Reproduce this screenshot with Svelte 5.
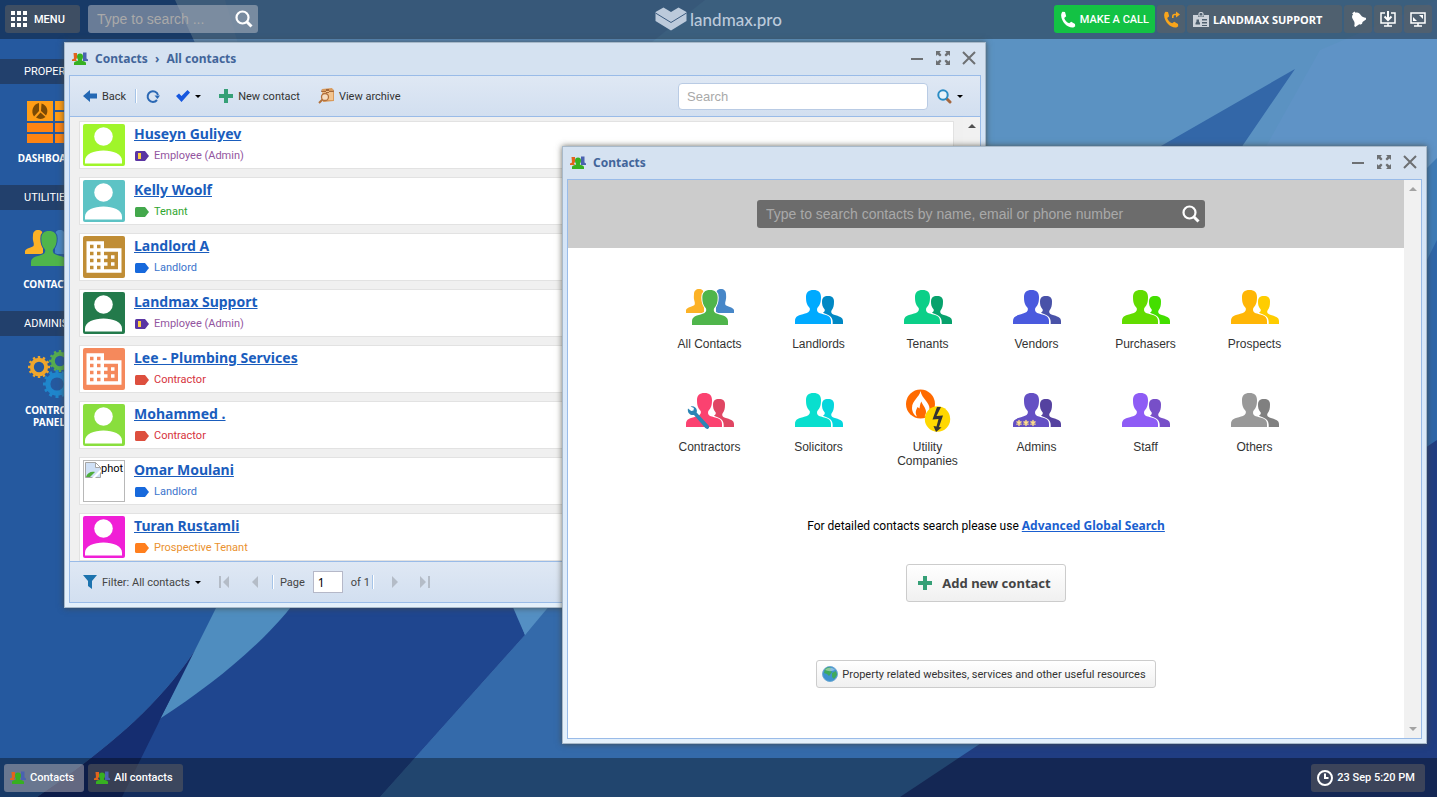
<script>
	// Contacts shown in the "All contacts" window
	const contacts = [
		{ name: 'Huseyn Guliyev', type: 'Employee (Admin)', kind: 'admin', avatar: 'person', color: '#a0f52a' },
		{ name: 'Kelly Woolf', type: 'Tenant', kind: 'tenant', avatar: 'person', color: '#5dc3c5' },
		{ name: 'Landlord A', type: 'Landlord', kind: 'landlord', avatar: 'company', color: '#c08d35' },
		{ name: 'Landmax Support', type: 'Employee (Admin)', kind: 'admin', avatar: 'person', color: '#237a4b' },
		{ name: 'Lee - Plumbing Services', type: 'Contractor', kind: 'contractor', avatar: 'company', color: '#f5895c' },
		{ name: 'Mohammed .', type: 'Contractor', kind: 'contractor', avatar: 'person', color: '#89de3d' },
		{ name: 'Omar Moulani', type: 'Landlord', kind: 'landlord', avatar: 'missing', color: '#ffffff' },
		{ name: 'Turan Rustamli', type: 'Prospective Tenant', kind: 'prospect', avatar: 'person', color: '#f01fd6' }
	];

	const kinds = {
		admin: { tag: '#5b35a3', text: '#9355a0' },
		tenant: { tag: '#43a84c', text: '#2fa62f' },
		landlord: { tag: '#1769dc', text: '#3a74cc' },
		contractor: { tag: '#dd4f3e', text: '#d6323c' },
		prospect: { tag: '#ff7f1e', text: '#ea912f' }
	};

	const groups = [
		{ label: 'All Contacts', icon: 'all' },
		{ label: 'Landlords', front: '#00aaff', back: '#0088c4' },
		{ label: 'Tenants', front: '#0bcf88', back: '#07a26c' },
		{ label: 'Vendors', front: '#4a5ade', back: '#4952a8' },
		{ label: 'Purchasers', front: '#62dc00', back: '#43df00' },
		{ label: 'Prospects', front: '#ffb606', back: '#ffcd00' },
		{ label: 'Contractors', front: '#fb4270', back: '#e04663', badge: 'wrench' },
		{ label: 'Solicitors', front: '#09dfce', back: '#06d6dc' },
		{ label: 'Utility Companies', icon: 'utility' },
		{ label: 'Admins', front: '#6450c4', back: '#5542a0', badge: 'stars' },
		{ label: 'Staff', front: '#8e5cf5', back: '#774fc8' },
		{ label: 'Others', front: '#999999', back: '#808080' }
	];

	const sections = [
		{ title: 'PROPERTY', item: 'DASHBOARD', icon: 'dashboard' },
		{ title: 'UTILITIES', item: 'CONTACTS', icon: 'contacts' },
		{ title: 'ADMINISTRATION', item: 'CONTROL PANEL', icon: 'gears' }
	];

	const teeth = [0, 30, 60, 90, 120, 150];

	let page = $state(1);
</script>

{#snippet peopleMini()}
	<svg class="mini" width="16" height="13" viewBox="0 0 16 13" aria-hidden="true">
		<path fill="#e2641d" d="M1.500 1h3.500v5l-1 1.500 1 1.500H0V7.500L2 6.500z" />
		<path fill="#4a62b0" d="M11 .5h3.500v6l1.500 1V9h-5z" />
		<path fill="#37b021" d="M8 1.500c2 0 3 1 3 3 0 1.500-.5 2.500-1.200 3.500.3 1.200 3.700 1 4.200 3V13H2v-2c.5-2 3.900-1.800 4.200-3C5.500 7 5 6 5 4.500c0-2 1-3 3-3z" />
	</svg>
{/snippet}

{#snippet peopleAll(gap)}
	<svg width="48" height="37" viewBox="0 0 48 37" aria-hidden="true">
		<path fill="#fcb226" d="M13 0c3 0 5 1.500 5 5v19H0v-3c1-3 7-3.500 8.500-5 .6-1.500.3-3-.2-4.500C7.500 9 8 6 8 5c0-3 2-5 5-5z" />
		<path fill="#4787c8" d="M35 0c-3 0-5 1.500-5 5v19h18v-3c-1-3-7-3.500-8.500-5-.6-1.500-.3-3 .2-4.500.8-2.500.3-5.500.3-6.500 0-3-2-5-5-5z" />
		<path fill="#4fb54b" stroke={gap} stroke-width="2" paint-order="stroke" d="M24 1c5 0 7.700 2.500 7.700 7.500 0 4.500-.7 7.500-3.700 11-.7 3 .5 4.500 4 5.500 6 1.800 10 2.500 10 7.500V36H6v-3.500C6 27.500 10 26.800 16 25c3.500-1 4.700-2.500 4-5.500-3-3.500-3.700-6.500-3.700-11C16.300 3.500 19 1 24 1z" />
	</svg>
{/snippet}

{#snippet people(front, back, badge)}
	<svg width="48" height="37" viewBox="0 0 48 37" aria-hidden="true">
		<path fill={back} d="M33 7c4 0 6 1.800 6 5.500 0 4-.5 6.500-2.500 9-.8 2 0 3.300 2.500 4.200 5 1.600 9 2.300 9 6.300v3H37.700c.3-5-1-7.500-5-9.300-2.500-1.200-4-1.500-4.700-2.200 1.500-.8 2-1.500 1.700-3-2.300-2.500-2.700-5-2.700-8C27 8.800 29 7 33 7z" />
		<path fill={front} d="M18.500 1C23.500 1 26 3.500 26 8c0 5-.8 8-3.700 11-.8 3 .2 4.500 3.700 5.600 6 1.900 10 2.400 10 7.400v3H0v-3c0-5 4-5.500 10-7.400 3.500-1.100 5.500-2.600 4.700-5.600C11.800 16 11 13 11 8c0-4.500 2.500-7 7.500-7z" />
		{#if badge === 'wrench'}
			<path fill="#2b85b5" d="M2 16.500l3.200 2.600 2.300-.5.400-2.600-3.300-1.500c3-.8 6 1 6.300 4 0 .8 0 1.400-.3 2l12 13c1 1.200.5 2.500-.5 3.200-1 .5-2 .2-2.800-.6L8 23c-4 .8-7-2.500-6-6.500z" />
		{:else if badge === 'stars'}
			<g stroke="#ffe08a" stroke-width="1.400" stroke-linecap="round">
				{#each [6, 13, 20] as x}
					<path d="M{x} 28.500v5M{x - 2} 29.800l4 2.400M{x - 2} 32.200l4-2.400" />
				{/each}
			</g>
		{/if}
	</svg>
{/snippet}

{#snippet utilityIcon()}
	<svg width="48" height="37" viewBox="0 0 48 37" overflow="visible" aria-hidden="true">
		<circle cx="16.500" cy="12" r="14.500" fill="#ff6a00" />
		<path fill="#fff" d="M16.500-1c-1 6-8.500 9.500-8.500 17 0 5 3.500 8 5 8.500-2.500-4.500-.5-7 .5-9.500l2 1.500c.5-3 .5-5 2-7 .5 3 4.500 6.500 4.500 10 0 2-.5 3.500-1.500 5 3-1.500 5-4.500 5-8 0-6.500-7.500-9.500-9-17.500z" />
		<circle cx="33.500" cy="27" r="12.700" fill="#ffd800" />
		<path fill="#333" d="M33 15l-4.500 12.500 6-.5-2 7.500-3-.5L32 40l5.500-4.500-2.500-.5 4-11.500-6.500.5L37 15z" />
	</svg>
{/snippet}

{#snippet gear(x, y, r, color)}
	<g fill="none" stroke={color} transform="translate({x} {y})">
		<circle r={r * 0.65} stroke-width={r * 0.36} />
		{#each teeth as angle}
			<path stroke-width={r * 0.22} d="M0 {-r}V{-r * 0.72}M0 {r}V{r * 0.72}" transform="rotate({angle})" />
		{/each}
	</g>
{/snippet}

{#snippet plus()}
	<svg width="14" height="14" viewBox="0 0 14 14" aria-hidden="true">
		<path fill="#36a077" d="M5 0h4v5h5v4H9v5H5V9H0V5h5z" />
	</svg>
{/snippet}

{#snippet windowButtons()}
	<div class="window-buttons">
		<button aria-label="Minimise">
			<svg width="14" height="14" viewBox="0 0 14 14"><path d="M1 8h12" stroke="#6d7073" stroke-width="2" /></svg>
		</button>
		<button aria-label="Maximise">
			<svg width="14" height="14" viewBox="0 0 14 14">
				<path fill="#6d7073" d="M0 0h5L3.500 1.500 5.500 4 4 5.500 1.500 3.500 0 5zM14 0H9l1.500 1.500L8.500 4 10 5.500l2.500-2L14 5zM0 14h5l-1.500-1.500 2-2.500L4 8.500l-2.500 2L0 9zM14 14H9l1.500-1.500-2-2.500L10 8.500l2.500 2L14 9z" />
			</svg>
		</button>
		<button aria-label="Close">
			<svg width="14" height="14" viewBox="0 0 14 14"><path d="M1 1l12 12M13 1L1 13" stroke="#6d7073" stroke-width="2" /></svg>
		</button>
	</div>
{/snippet}

{#snippet lens()}
	<svg width="18" height="18" viewBox="0 0 18 18" fill="none" stroke="#fff" aria-hidden="true">
		<circle cx="7.500" cy="7.500" r="6" stroke-width="2.200" />
		<path d="M12 12l4.500 4.500" stroke-width="3" />
	</svg>
{/snippet}

{#snippet scrollbar(both)}
	<div class="scrollbar" aria-hidden="true">
		<svg width="8" height="4" viewBox="0 0 8 4"><path d="M0 4l4-4 4 4z" /></svg>
		{#if both}
			<svg width="8" height="4" viewBox="0 0 8 4"><path d="M0 0h8L4 4z" /></svg>
		{/if}
	</div>
{/snippet}

<div class="desktop">
	<svg class="wallpaper" viewBox="0 0 1437 797" preserveAspectRatio="none" aria-hidden="true">
		<rect width="1437" height="797" fill="#5b92c2" />
		<path fill="#5588bb" d="M175 0h530L560 115H0V0z" />
		<path fill="#6490ba" opacity=".6" d="M175 0h50l18 60h-50z" />
		<path fill="#5f93c6" d="M1437 0v300H1180l140-250z" />
		<path fill="#3367a8" d="M1295 69L980 250v400h0L1243 145z" />
		<path fill="#3f7bb6" d="M1437 158l-20 20v100h20z" />
		<path fill="#2f66a8" d="M1437 240l-20 40v300h20z" />
		<path fill="#346aaa" d="M525 635L700 400h300v397H380z" />
		<path fill="#203d82" d="M1437 440L900 797h537z" />
		<path fill="#1f468f" d="M110 797l51-79 130-150h210l24 67-145 162z" />
		<path fill="#25599f" d="M0 0h175l28 60 15 548-13 26c-40 70-105 120-168 163H0z" />
		<path fill="#152d70" d="M205 634c-40 70-105 120-168 163h85l39-79z" />
		<path fill="#4f8dbf" d="M230 580h80c-30 50-90 100-149 138z" />
		<path fill="#548fc3" d="M501 580h70l-46 55z" />
	</svg>

	<header class="topbar">
		<div class="bar-group">
			<button class="chip menu">
				<svg width="16" height="16" viewBox="0 0 16 16" fill="#fff" aria-hidden="true">
					<path d="M0 0h4v4H0zM6 0h4v4H6zM12 0h4v4h-4zM0 6h4v4H0zM6 6h4v4H6zM12 6h4v4h-4zM0 12h4v4H0zM6 12h4v4H6zM12 12h4v4h-4z" />
				</svg>
				MENU
			</button>
			<form class="global-search">
				<input type="text" aria-label="Search" placeholder="Type to search ..." />
				<button type="button" aria-label="Run search">{@render lens()}</button>
			</form>
		</div>

		<div class="logo">
			<svg width="32" height="24" viewBox="0 0 32 24" fill="currentColor" aria-hidden="true">
				<path d="M.5 5L8.500.5 16 5l7.500-4.500 8 4.500v9L16 23.500.5 14z" />
				<path d="M.5 6L16 15.500 31.500 6" fill="none" stroke="#3a5a7e" />
			</svg>
			<span>landmax.pro</span>
		</div>

		<div class="bar-group right">
			<button class="chip call">
				<svg width="16" height="17" viewBox="0 0 16 17" aria-hidden="true">
					<path fill="#fff" d="M2.500.7L5 1l1.200 4.200-2 1.800c.8 2.500 2.500 4.300 5 5.300l2-1.600L15 13l.2 2.300C13 18 8 16 5 13S-.5 4 2.500.7z" />
				</svg>
				MAKE A CALL
			</button>
			<button class="chip square" aria-label="Forward call">
				<svg width="17" height="17" viewBox="0 0 17 17" aria-hidden="true">
					<path fill="#f9a51b" d="M2.500.7L5 1l1.200 4.200-2 1.800c.8 2.500 2.500 4.300 5 5.300l2-1.600L15 13l.2 2.300C13 18 8 16 5 13S-.5 4 2.500.7z" />
					<path fill="none" stroke="#f9a51b" stroke-width="1.600" d="M9.800 7V5.500q0-2 2-2H14" />
					<path fill="#f9a51b" d="M13 .5l4 3-4 3z" />
				</svg>
			</button>
			<button class="chip account">
				<svg width="16" height="15" viewBox="0 0 16 15" aria-hidden="true">
					<path fill="#cdd3da" fill-rule="evenodd" d="M0 3h5v2h6V3h5v12H0zM2.500 12.500H7V11L6 9.500V7.500H3.500v2L2.500 11zM9 7v1.500h5V7zm0 3v1.500h5V10zm0 3v1h5v-1z" />
					<path fill="none" stroke="#cdd3da" stroke-width="1.200" d="M6 4V2c0-2 4-2 4 0v2z" />
				</svg>
				LANDMAX SUPPORT
			</button>
			<button class="chip square" aria-label="Notifications">
				<svg width="16" height="16" viewBox="0 0 16 16" aria-hidden="true">
					<path fill="#fff" transform="translate(8 8) rotate(-35)" d="M-1.500-8h3v1.500C4-6 4.500-4 4.500-1c0 2 1 3 2.500 4.500V5h-5q-2 3-4 0h-5V3.500C-5.500 2-4.500 1-4.500-1c0-3 .5-5 3-5.500z" />
				</svg>
			</button>
			<button class="chip square" aria-label="Downloads">
				<svg width="16" height="16" viewBox="0 0 16 16" fill="none" stroke="#fff" aria-hidden="true">
					<path stroke-width="1.500" d="M5 2H1v10h14V2h-4M4 15h8M8 12v3" />
					<path stroke-width="2" d="M8 0v8M4.500 5.500L8 9l3.500-3.500" />
				</svg>
			</button>
			<button class="chip square" aria-label="Full screen">
				<svg width="16" height="16" viewBox="0 0 16 16" aria-hidden="true">
					<path fill="none" stroke="#fff" stroke-width="1.500" d="M1 2h14v10H1zM4 15h8M8 12v3" />
					<path fill="#fff" d="M13 4v4L9 4zM3 10V6l4 4z" />
				</svg>
			</button>
		</div>
	</header>

	<nav class="sidebar">
		{#each sections as section}
			<h2>{section.title}</h2>
			<a href="#{section.icon}">
				<div class="picture">
					{#if section.icon === 'dashboard'}
						<svg width="44" height="42" viewBox="0 0 44 42" aria-hidden="true">
							<path fill="#ff9d16" d="M0 0h26v20H0zM28 0h16v9H28zM28 11h16v9H28z" />
							<path fill="#ff8412" d="M0 22h26v9H0zM28 22h16v9H28zM0 33h26v9H0zM28 33h16v9H28z" />
							<path fill="#7a4a05" d="M12 2v8L7 15.500C3.500 10.500 6 3 12 2zM14.500 2.500C20 4 22 10 19 14.500L14 10zM9 16.500l4.500-5 5 4.500c-3 2.500-6.500 2.500-9.500.5z" />
						</svg>
					{:else if section.icon === 'contacts'}
						{@render peopleAll('#25599f')}
					{:else}
						<svg width="48" height="50" viewBox="0 0 48 50" aria-hidden="true">
							{@render gear(14, 18, 11, '#efa62c')}
							{@render gear(35, 12, 11, '#56ab4e')}
							{@render gear(32, 35, 14, '#1f86cc')}
						</svg>
					{/if}
				</div>
				<span>{section.item}</span>
			</a>
		{/each}
	</nav>

	<section class="window list-window">
		<div class="titlebar">
			{@render peopleMini()}
			<h1>Contacts <span class="crumb">›</span> All contacts</h1>
			{@render windowButtons()}
		</div>
		<div class="frame">
			<div class="toolbar">
				<button class="tool">
					<svg width="14" height="12" viewBox="0 0 14 12" aria-hidden="true"><path fill="#2468b4" d="M0 6l7-6v3.500h7v5H7V12z" /></svg>
					Back
				</button>
				<span class="divider"></span>
				<button class="tool refresh" aria-label="Refresh">
					<svg width="14" height="14" viewBox="0 0 14 14" aria-hidden="true">
						<path fill="none" stroke="#2b68b4" stroke-width="2" d="M11 11a5.300 5.300 0 1 1 1-5" />
						<path fill="#2b68b4" d="M8.500 6.500H14L11.500 10z" />
					</svg>
				</button>
				<button class="tool check" aria-label="Select">
					<svg width="14" height="12" viewBox="0 0 14 12" aria-hidden="true"><path fill="#1657df" d="M0 6l3-2.500L5.500 6 11.500 0 14 2.500 5.500 12z" /></svg>
					<i class="caret"></i>
				</button>
				<button class="tool new">{@render plus()} New contact</button>
				<button class="tool archive">
					<svg width="16" height="16" viewBox="0 0 16 16" aria-hidden="true">
						<path fill="#d99a5b" d="M4 1l10-1 2 3v10l-11 1z" />
						<path fill="#f2c48f" d="M4 3h11v9H6z" />
						<path fill="#a5683a" d="M8 1h3v4H8zM4 1l-1 3h13l-1-3v2H4z" />
						<circle cx="7" cy="9" r="3.500" fill="#f6dcc0" stroke="#b3713c" stroke-width="1.300" />
						<path stroke="#b3713c" stroke-width="2" d="M4.500 11.500L1 15" />
					</svg>
					View archive
				</button>
				<input class="list-search" type="text" aria-label="Search contacts" placeholder="Search" />
				<button class="tool" aria-label="Search options">
					<svg width="15" height="15" viewBox="0 0 15 15" fill="none" aria-hidden="true">
						<path stroke="#a5673f" stroke-width="3" stroke-linecap="round" d="M10 10l3 3" />
						<circle cx="6" cy="6" r="4.700" fill="#eaf4fb" stroke="#2b8cc4" stroke-width="2" />
					</svg>
					<i class="caret"></i>
				</button>
			</div>

			<div class="list-body">
				<ul class="contacts">
					{#each contacts as contact}
						<li>
							<div class="avatar" class:missing={contact.avatar === 'missing'} style="background: {contact.color}">
								{#if contact.avatar === 'person'}
									<svg width="42" height="42" viewBox="0 0 42 42" fill="#fff" aria-hidden="true">
										<circle cx="20.500" cy="12.500" r="9.300" />
										<path d="M2 39.500v-3C2 30 11 26.500 20.500 26.500S39 30 39 36.500v3z" />
									</svg>
								{:else if contact.avatar === 'company'}
									<svg width="42" height="42" viewBox="0 0 24 24" fill="#fff" aria-hidden="true">
										<path d="M12 7V3H2v18h20V7H12zM6 19H4v-2h2v2zm0-4H4v-2h2v2zm0-4H4V9h2v2zm0-4H4V5h2v2zm4 12H8v-2h2v2zm0-4H8v-2h2v2zm0-4H8V9h2v2zm0-4H8V5h2v2zm10 12h-8v-2h2v-2h-2v-2h2v-2h-2V9h8v10zm-2-8h-2v2h2v-2zm0 4h-2v2h2v-2z" />
									</svg>
								{:else}
									<svg width="16" height="16" viewBox="0 0 16 16" aria-hidden="true">
										<path fill="#cfe0f6" stroke="#a5a5a5" d="M.5.5h10l5 5v10H.5z" />
										<path fill="#fff" stroke="#a5a5a5" d="M10.500.5v5h5z" />
										<path fill="#4fae3c" d="M1 15c1-4 5-6 9-5l-5 5z" />
										<path fill="#fff" d="M7 16l9-9v3l-6 6z" />
									</svg>
									<span>phot</span>
								{/if}
							</div>
							<div class="details">
								<a href="#contact">{contact.name}</a>
								<p style="color: {kinds[contact.kind].text}">
									<svg width="14" height="10" viewBox="0 0 14 10" aria-hidden="true">
										<path fill={kinds[contact.kind].tag} d="M1.500 0H10l4 5-4 5H1.500Q0 10 0 8.500v-7Q0 0 1.500 0z" />
										{#if contact.kind === 'admin'}
											<path fill="#ffcf3f" d="M3 2h3v6H3z" />
										{/if}
									</svg>
									{contact.type}
								</p>
							</div>
						</li>
					{/each}
				</ul>
				{@render scrollbar(false)}
			</div>

			<div class="toolbar footer">
				<button class="tool filter">
					<svg width="14" height="14" viewBox="0 0 14 14" aria-hidden="true"><path fill="#1d73ae" d="M0 0h14L9 6v8l-4-3V6z" /></svg>
					Filter: All contacts
					<i class="caret"></i>
				</button>
				<button class="pager" aria-label="First page" disabled>
					<svg width="11" height="12" viewBox="0 0 11 12"><path d="M0 0h2v12H0zM10 0v12L4 6z" /></svg>
				</button>
				<button class="pager" aria-label="Previous page" disabled>
					<svg width="6" height="12" viewBox="0 0 6 12"><path d="M6 0v12L0 6z" /></svg>
				</button>
				<span class="divider"></span>
				<label for="page">Page</label>
				<input id="page" class="page" type="text" bind:value={page} />
				<span>of 1</span>
				<span class="divider"></span>
				<button class="pager" aria-label="Next page" disabled>
					<svg width="6" height="12" viewBox="0 0 6 12"><path d="M0 0v12l6-6z" /></svg>
				</button>
				<button class="pager" aria-label="Last page" disabled>
					<svg width="11" height="12" viewBox="0 0 11 12"><path d="M9 0h2v12H9zM1 0v12l6-6z" /></svg>
				</button>
			</div>
		</div>
	</section>

	<section class="window groups-window">
		<div class="titlebar">
			{@render peopleMini()}
			<h1>Contacts</h1>
			{@render windowButtons()}
		</div>
		<div class="frame row">
			<div class="groups-body">
				<div class="search-strip">
					<form class="contact-search">
						<input type="text" aria-label="Search contacts" placeholder="Type to search contacts by name, email or phone number" />
						<button type="button" aria-label="Find">{@render lens()}</button>
					</form>
				</div>
				<div class="groups">
					{#each groups as group}
						<a href="#group">
							{#if group.icon === 'all'}
								{@render peopleAll('#ffffff')}
							{:else if group.icon === 'utility'}
								{@render utilityIcon()}
							{:else}
								{@render people(group.front, group.back, group.badge)}
							{/if}
							<span>{group.label}</span>
						</a>
					{/each}
				</div>
				<p class="hint">For detailed contacts search please use <a href="#search">Advanced Global Search</a></p>
				<button class="push add">{@render plus()} Add new contact</button>
				<button class="push resources">
					<svg width="16" height="16" viewBox="0 0 16 16" aria-hidden="true">
						<circle cx="8" cy="8" r="7.500" fill="#3f93cf" stroke="#6fa9d4" />
						<path fill="#3faa5c" d="M3 3c2-2 5-2 6-1L8 4l2 2-3 4-2-2-3-1zM10 7l4-2 1 4-3 4-2-2z" />
						<path fill="#fff" opacity=".4" d="M3 4c2-3 8-3 10 0-3 1.500-7 1.500-10 0z" />
					</svg>
					Property related websites, services and other useful resources
				</button>
			</div>
			{@render scrollbar(true)}
		</div>
	</section>

	<footer class="taskbar">
		<button class="chip task active">{@render peopleMini()} Contacts</button>
		<button class="chip task">{@render peopleMini()} All contacts</button>
		<div class="chip clock">
			<svg width="16" height="16" viewBox="0 0 16 16" fill="none" stroke="#fff" stroke-width="2" aria-hidden="true">
				<circle cx="8" cy="8" r="7" />
				<path d="M8 3.500V8h3.500" />
			</svg>
			23 Sep 5:20 PM
		</div>
	</footer>
</div>

<style>
	.desktop {
		position: relative;
		display: flex;
		flex-direction: column;
		height: 100vh;
		overflow: hidden;
		font-family: Roboto, "Noto Sans", sans-serif;
		font-size: 11px;
		color: #333;
	}

	.desktop * {
		box-sizing: border-box;
	}

	svg {
		display: block;
		flex: none;
	}

	button {
		display: flex;
		align-items: center;
		border: 0;
		padding: 0;
		background: none;
		font: inherit;
		color: inherit;
		white-space: nowrap;
	}

	input {
		min-width: 0;
		border: 0;
		font: 14px "Liberation Sans", Arial, sans-serif;
	}

	input::placeholder {
		color: #a9a9a9;
		opacity: 1;
	}

	h1,
	h2,
	p,
	ul {
		margin: 0;
		padding: 0;
	}

	.wallpaper {
		position: absolute;
		inset: 0;
		width: 100%;
		height: 100%;
	}

	/* Top bar */
	.topbar {
		position: relative;
		display: grid;
		grid-template-columns: 1fr auto 1fr;
		align-items: center;
		height: 39px;
		padding: 0 5px 1px;
		background: rgba(0, 0, 0, 0.35);
	}

	.bar-group {
		display: flex;
		gap: 8px;
	}

	.bar-group.right {
		justify-content: flex-end;
		gap: 2px;
	}

	.chip {
		display: flex;
		align-items: center;
		height: 28px;
		border-radius: 3px;
		background: rgba(100, 98, 96, 0.5);
		color: #fff;
		font-weight: 500;
	}

	.menu {
		width: 75px;
		padding-left: 6px;
		gap: 7px;
	}

	.global-search {
		display: flex;
		align-items: center;
		width: 170px;
		height: 28px;
		padding: 0 5px 0 7px;
		border-radius: 3px;
		background: rgba(185, 190, 200, 0.5);
	}

	.global-search input,
	.contact-search input {
		flex: 1;
		background: none;
		color: #fff;
	}

	.logo {
		display: flex;
		align-items: center;
		gap: 3px;
		color: #bccadb;
		font: 500 17px Lato, sans-serif;
	}

	.call {
		padding: 0 6px;
		gap: 4px;
		background: #13c244;
	}

	.square {
		justify-content: center;
		width: 28px;
	}

	.account {
		width: 155px;
		padding-left: 6px;
		gap: 4px;
		font-family: "Noto Sans", sans-serif;
		font-weight: 700;
	}

	/* Sidebar */
	.sidebar {
		position: relative;
		width: 98px;
		padding-top: 20px;
		color: #fff;
	}

	.sidebar h2 {
		height: 25px;
		padding-left: 24px;
		background: rgba(34, 58, 95, 0.8);
		font-size: 11px;
		font-weight: 400;
		line-height: 25px;
	}

	.sidebar a {
		display: flex;
		flex-direction: column;
		align-items: center;
		gap: 2px;
		height: 101px;
		padding-top: 10px;
		color: #fff;
		font: 700 10px/12px "Noto Sans", sans-serif;
		text-align: center;
		text-decoration: none;
	}

	.picture {
		display: grid;
		height: 56px;
		place-items: center;
	}

	.sidebar span {
		max-width: 70px;
	}

	/* Windows */
	.window {
		position: absolute;
		display: flex;
		flex-direction: column;
		padding: 0 4px 4px;
		border: 1px solid #a8b9c9;
		background: linear-gradient(#d5e2f1, #d5e2f1 33px, #d4e4f7 50px, #e4f0fb);
		box-shadow: 0 0 6px rgba(70, 70, 60, 0.8);
	}

	.list-window {
		inset: 42px 451px 189px 64px;
	}

	.groups-window {
		inset: 146px 10px 53px 562px;
	}

	.titlebar {
		display: flex;
		flex: none;
		align-items: center;
		height: 32px;
		padding: 0 5px 2px 3px;
		gap: 7px;
	}

	.titlebar h1 {
		flex: 1;
		color: #42659a;
		font: 700 12px "Noto Sans", sans-serif;
	}

	.crumb {
		margin: 0 4px;
	}

	.window-buttons {
		display: flex;
		gap: 12px;
	}

	.frame {
		display: flex;
		flex: 1;
		flex-direction: column;
		min-height: 0;
		border: 1px solid #99bbe8;
	}

	.frame.row {
		flex-direction: row;
		background: #fff;
	}

	.toolbar {
		display: flex;
		flex: none;
		align-items: center;
		height: 41px;
		padding: 0 17px 0 13px;
		border-bottom: 1px solid #99bbe8;
		background: linear-gradient(#dfe8f4, #d2dff0);
	}

	.tool {
		gap: 5px;
	}

	.divider {
		width: 2px;
		height: 14px;
		margin: 0 9px;
		border-left: 1px solid #a5c4e8;
		background: #fff;
	}

	.check {
		margin-left: 16px;
	}

	.new {
		margin-left: 18px;
	}

	.archive {
		margin-left: 18px;
	}

	.caret {
		border: 3px solid transparent;
		border-top-color: #000;
		border-bottom: 0;
	}

	.list-search {
		width: 250px;
		height: 27px;
		margin: 0 9px 0 auto;
		padding: 0 8px;
		border: 1px solid #b9cbe4;
		border-radius: 4px;
		background: #fff;
		font-size: 13px;
	}

	.list-body {
		display: flex;
		flex: 1;
		min-height: 0;
		background: #f0f0f0;
	}

	.contacts {
		flex: 1;
		margin: 4px 9px 0;
		overflow: hidden;
		list-style: none;
	}

	.contacts li {
		display: flex;
		gap: 9px;
		height: 48px;
		margin-bottom: 8px;
		padding: 2px 3px;
		border: 1px solid #e2e2e2;
		background: #fff;
	}

	.avatar {
		flex: none;
		width: 42px;
		height: 42px;
		overflow: hidden;
		border-radius: 2px;
	}

	.avatar.missing {
		display: flex;
		padding: 1px;
		border: 1px solid #b8b8b8;
		border-radius: 0;
		color: #000;
	}

	.details a {
		color: #1a5dbd;
		font: 700 14px/20px "Noto Sans", sans-serif;
	}

	.details p {
		display: flex;
		align-items: center;
		gap: 5px;
		padding: 4px 0 0 1px;
		line-height: 16px;
	}

	.scrollbar {
		display: flex;
		flex: none;
		flex-direction: column;
		justify-content: space-between;
		align-items: center;
		width: 17px;
		padding: 7px 0;
		background: #f1f1f1;
		fill: #505050;
	}

	.groups-window .scrollbar {
		fill: #a3a3a3;
	}

	.footer {
		border-top: 1px solid #99bbe8;
		border-bottom: 0;
		color: #444;
	}

	.filter {
		margin-right: 9px;
	}

	.pager {
		justify-content: center;
		width: 30px;
		height: 20px;
		fill: #b4bcc7;
	}

	.footer .divider {
		margin: 0 6px 0 2px;
	}

	.page {
		width: 30px;
		height: 22px;
		margin: 0 8px;
		padding: 0 4px;
		border: 1px solid #b5b8c8;
		background: #fff;
		font: 12px "Noto Sans", sans-serif;
	}

	/* Contact groups window */
	.groups-body {
		display: flex;
		flex: 1;
		flex-direction: column;
		align-items: center;
		min-width: 0;
		background: #fff;
	}

	.search-strip {
		display: flex;
		align-self: stretch;
		justify-content: center;
		align-items: center;
		height: 68px;
		padding-right: 10px;
		background: #ccc;
	}

	.contact-search {
		display: flex;
		align-items: center;
		width: 448px;
		height: 28px;
		padding: 0 5px 0 7px;
		border-radius: 3px;
		background: #6c6c6c;
	}

	.groups {
		display: grid;
		grid-template-columns: repeat(6, 109px);
		grid-auto-rows: 103px;
		padding: 41px 8px 0 0;
	}

	.groups a {
		display: flex;
		flex-direction: column;
		align-items: center;
		gap: 11px;
		color: #333;
		font: 12px/14px "Liberation Sans", Arial, sans-serif;
		text-align: center;
		text-decoration: none;
	}

	.groups span {
		max-width: 70px;
	}

	.hint {
		margin-top: 22px;
		color: #000;
		font-size: 12px;
		line-height: 18px;
	}

	.hint a {
		color: #1a5fd0;
		font-family: "Noto Sans", sans-serif;
		font-weight: 700;
	}

	.push {
		border: 1px solid #ccc;
		border-radius: 3px;
		background: linear-gradient(#fff, #f0f0f0);
	}

	.add {
		height: 38px;
		margin-top: 29px;
		padding: 0 14px 0 11px;
		gap: 10px;
		color: #444;
		font: 700 13px "Noto Sans", sans-serif;
	}

	.resources {
		height: 28px;
		margin-top: 58px;
		padding: 0 9px 0 5px;
		gap: 4px;
	}

	/* Task bar */
	.taskbar {
		position: absolute;
		right: 0;
		bottom: 0;
		left: 0;
		display: flex;
		align-items: center;
		gap: 4px;
		height: 39px;
		padding: 0 12px 0 4px;
		background: rgba(0, 0, 0, 0.35);
	}

	.task {
		padding: 0 10px 0 6px;
		gap: 4px;
	}

	.task.active {
		background: rgba(185, 180, 185, 0.5);
	}

	.clock {
		margin-left: auto;
		padding: 0 10px 0 6px;
		gap: 4px;
	}
</style>
